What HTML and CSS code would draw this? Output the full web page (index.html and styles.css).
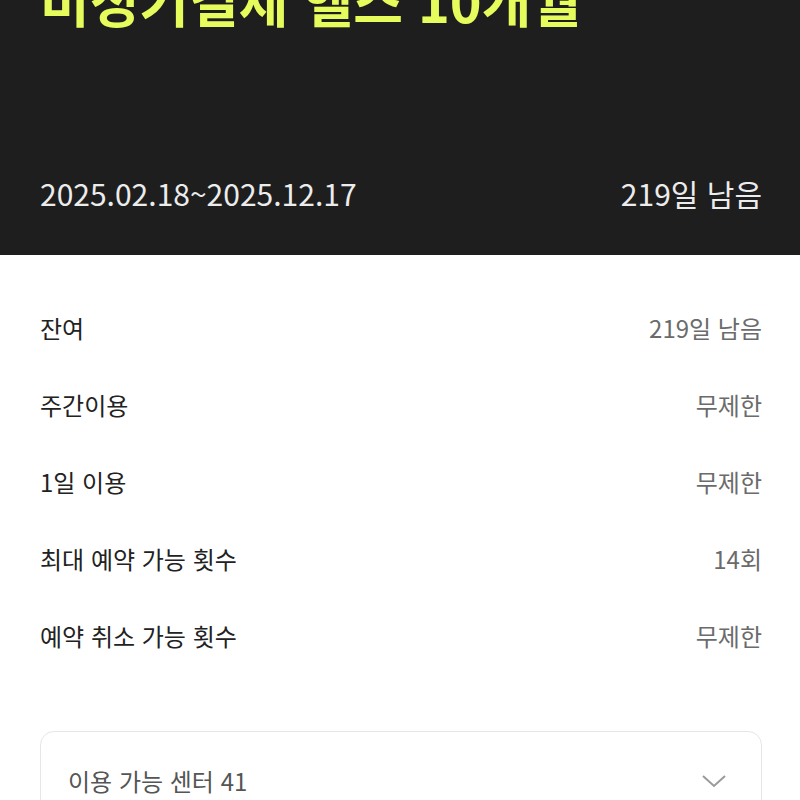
FILE: index.html
```html
<!DOCTYPE html>
<html lang="ko">

<head>
    <meta charset="UTF-8">
    <meta name="viewport" content="width=device-width, initial-scale=1.0">
    <title>회원권 상세</title>
    <link rel="stylesheet" href="styles.css">
</head>

<body>
    <div class="pass-header">
        <h1 class="pass-title">비정기결제 헬스 10개월</h1>
        <div class="pass-period">
            <span>2025.02.18~2025.12.17</span>
            <span>219일 남음</span>
        </div>
    </div>

    <div class="info-list">
        <div class="info-row">
            <span class="info-label">잔여</span>
            <span class="info-value">219일 남음</span>
        </div>
        <div class="info-row">
            <span class="info-label">주간이용</span>
            <span class="info-value">무제한</span>
        </div>
        <div class="info-row">
            <span class="info-label">1일 이용</span>
            <span class="info-value">무제한</span>
        </div>
        <div class="info-row">
            <span class="info-label">최대 예약 가능 횟수</span>
            <span class="info-value">14회</span>
        </div>
        <div class="info-row">
            <span class="info-label">예약 취소 가능 횟수</span>
            <span class="info-value">무제한</span>
        </div>
    </div>

    <div class="center-card">
        <span class="center-title">이용 가능 센터 41</span>
        <svg class="chevron" width="26" height="16" viewBox="0 0 26 16">
            <polyline points="2,3 13,13 24,3" fill="none" stroke="#9a9a9a" stroke-width="2" />
        </svg>
    </div>
</body>

</html>
```

FILE: styles.css
```css
body {
    margin: 0;
    font-family: "Noto Sans CJK KR", "Noto Sans", sans-serif;
    background: #fff;
    overflow: hidden;
}

.pass-header {
    background: #1e1e1e;
    padding: 0 38px 40px 40px;
    height: 255px;
    box-sizing: border-box;
    overflow: hidden;
}

.pass-title {
    margin: -30px 0 0 0;
    font-size: 54px;
    line-height: 60px;
    font-weight: bold;
    color: #e6fb5c;
    white-space: nowrap;
}

.pass-period {
    display: flex;
    justify-content: space-between;
    margin-top: 143px;
    font-size: 30px;
    line-height: 40px;
    color: #ececec;
}

.info-list {
    padding: 34px 38px 0 40px;
}

.info-row {
    display: flex;
    justify-content: space-between;
    align-items: center;
    height: 77px;
    font-size: 24px;
}

.info-label {
    color: #222;
}

.info-value {
    color: #6b6b6b;
}

.center-card {
    display: flex;
    justify-content: space-between;
    align-items: center;
    margin: 57px 38px 0 40px;
    padding: 32px 34px 40px 27px;
    border: 1px solid #e6e6e6;
    border-radius: 14px;
}

.center-title {
    font-size: 24px;
    line-height: 34px;
    color: #555;
}
```
